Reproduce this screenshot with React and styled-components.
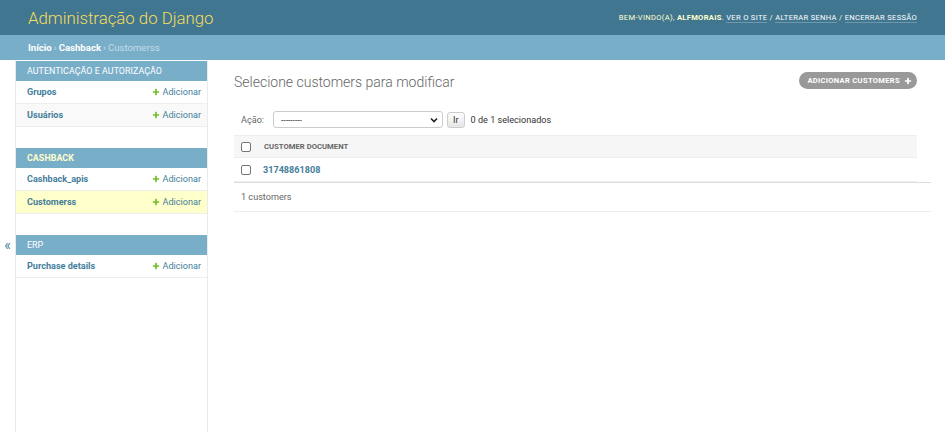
import React from 'react';
import styled, { createGlobalStyle } from 'styled-components';

const GlobalStyle = createGlobalStyle`
  html, body {
    margin: 0;
    padding: 0;
    background: #fff;
  }
  body {
    font-family: Roboto, "Liberation Sans", sans-serif;
    color: #333;
    font-size: 9.1px;
  }
  * {
    box-sizing: border-box;
  }
`;

const Page = styled.div`
  display: flex;
  flex-direction: column;
  min-height: 100vh;
`;

const Header = styled.div`
  display: flex;
  align-items: center;
  justify-content: space-between;
  height: 35px;
  padding: 0 28px;
  background: #417690;
`;

const Branding = styled.h1`
  margin: 0;
  font-size: 16.8px;
  font-weight: 300;
  color: #f5dd5d;
`;

const UserTools = styled.div`
  font-size: 7.6px;
  letter-spacing: 0.3px;
  text-transform: uppercase;
  color: #ffc;
  strong {
    font-weight: 700;
    color: #ffc;
  }
  a {
    color: #fff;
    text-decoration: none;
    border-bottom: 1px solid rgba(255, 255, 255, 0.25);
  }
`;

const Breadcrumbs = styled.div`
  display: flex;
  align-items: center;
  height: 25px;
  padding: 0 28px;
  background: #79aec8;
  color: #c4dce8;
  font-size: 9.6px;
  a {
    color: #fff;
    font-weight: 700;
    text-decoration: none;
  }
`;

const Sep = styled.span`
  margin: 0 2px;
`;

const Main = styled.div`
  flex: 1;
  display: flex;
`;

const Toggle = styled.div`
  flex: 0 0 16px;
  display: flex;
  align-items: center;
  justify-content: center;
  border-right: 1px solid #eaeaea;
  color: #447e9b;
  font-size: 14px;
  padding-bottom: 2px;
`;

const Sidebar = styled.nav`
  flex: 0 0 192px;
  border-right: 1px solid #eaeaea;
  border-top: 1px solid transparent;
`;

const Module = styled.div`
  margin-bottom: 21px;
`;

const Caption = styled.div`
  height: 20px;
  display: flex;
  align-items: center;
  padding: 0 11px;
  background: #79aec8;
  color: ${(p) => (p.current ? '#ffc' : '#fff')};
  font-weight: ${(p) => (p.current ? 700 : 400)};
  font-size: 8.9px;
  letter-spacing: 0.05px;
  text-transform: uppercase;
`;

const ModelRow = styled.div`
  height: 23px;
  display: flex;
  align-items: center;
  justify-content: space-between;
  padding: 0 6px 0 11px;
  border-bottom: 1px solid #eee;
  background: ${(p) => (p.current ? '#ffc' : p.even ? '#f9f9f9' : '#fff')};
`;

const ModelName = styled.a`
  color: #447e9b;
  font-weight: 700;
  font-size: 9.1px;
  text-decoration: none;
`;

const AddLink = styled.a`
  display: flex;
  align-items: center;
  gap: 3px;
  color: #447e9b;
  font-size: 9.1px;
  text-decoration: none;
`;

const PlusIcon = ({ color = '#70bf2b', size = 8 }) => (
  <svg width={size} height={size} viewBox="0 0 1792 1792">
    <path
      fill={color}
      d="M1600 796v192q0 40-28 68t-68 28h-416v416q0 40-28 68t-68 28h-192q-40 0-68-28t-28-68v-416h-416q-40 0-68-28t-28-68v-192q0-40 28-68t68-28h416v-416q0-40 28-68t68-28h192q40 0 68 28t28 68v416h416q40 0 68 28t28 68z"
    />
  </svg>
);

const Content = styled.div`
  flex: 1;
  padding: 14px 28px 14px 26px;
`;

const TitleRow = styled.div`
  display: flex;
  align-items: flex-start;
  justify-content: space-between;
  margin-bottom: 13px;
`;

const Title = styled.h1`
  margin: 0;
  font-size: 14px;
  font-weight: 300;
  line-height: 17px;
  color: #666;
`;

const ObjectTool = styled.a`
  display: flex;
  align-items: center;
  gap: 4px;
  height: 17px;
  margin-top: -2px;
  padding: 0 5px 0 8px;
  background: #999;
  border-radius: 10px;
  color: #fff;
  font-size: 7.6px;
  font-weight: 700;
  letter-spacing: 0.3px;
  text-transform: uppercase;
  text-decoration: none;
`;

const Actions = styled.div`
  display: flex;
  align-items: center;
  height: 31px;
  padding: 0 7px;
  color: #333;
`;

const ActionLabel = styled.label`
  color: #666;
  margin-right: 9px;
`;

const Select = styled.div`
  width: 170px;
  height: 17px;
  display: flex;
  align-items: center;
  justify-content: space-between;
  padding: 0 4px 0 7px;
  border: 1px solid #ccc;
  border-radius: 3px;
  font-size: 8.4px;
  color: #333;
`;

const GoButton = styled.button`
  height: 16px;
  margin-left: 4px;
  padding: 0 5px;
  border: 1px solid #ccc;
  border-radius: 3px;
  background: #fff;
  box-shadow: 0 -10px 14px -7px rgba(0, 0, 0, 0.15) inset;
  font-family: inherit;
  font-size: 9.1px;
  color: #333;
`;

const Counter = styled.span`
  margin-left: 6px;
`;

const Table = styled.table`
  width: 100%;
  border-collapse: collapse;
`;

const HeadCell = styled.th`
  height: 22px;
  padding: 0 ${(p) => (p.check ? '6px 0 7px' : '7px')};
  width: ${(p) => (p.check ? '23px' : 'auto')};
  background: #f6f6f6;
  border-top: 1px solid #eee;
  border-bottom: 1px solid #eee;
  text-align: left;
  color: #666;
  font-size: 7.7px;
  font-weight: 700;
  text-transform: uppercase;
`;

const Cell = styled.td`
  height: 24px;
  padding: 0 ${(p) => (p.check ? '6px 0 7px' : '6px')};
  border-bottom: 1px solid #eee;
`;

const Check = styled.span`
  display: block;
  width: 10px;
  height: 10px;
  border: 1px solid #767676;
  border-radius: 2px;
  background: #fff;
`;

const ResultLink = styled.a`
  color: #447e9b;
  font-weight: 700;
  font-size: 9.1px;
  text-decoration: none;
`;

const Paginator = styled.p`
  margin: 0 -14px 0 0;
  height: 30px;
  display: flex;
  align-items: center;
  padding: 0 7px;
  border-top: 1px solid #ddd;
  border-bottom: 1px solid #eee;
  color: #666;
  font-size: 9.1px;
`;

const modules = [
  {
    name: 'Autenticação e Autorização',
    models: ['Grupos', 'Usuários'],
  },
  {
    name: 'Cashback',
    current: true,
    models: ['Cashback_apis', 'Customerss'],
  },
  {
    name: 'ERP',
    models: ['Purchase details'],
  },
];

const App = () => {
  return (
    <Page>
      <GlobalStyle />
      <Header>
        <Branding>Administração do Django</Branding>
        <UserTools>
          Bem-vindo(a), <strong>alfmorais</strong>. <a>Ver o site</a> /{' '}
          <a>Alterar senha</a> / <a>Encerrar sessão</a>
        </UserTools>
      </Header>
      <Breadcrumbs>
        <a>Início</a>
        <Sep>›</Sep>
        <a>Cashback</a>
        <Sep>›</Sep>
        Customerss
      </Breadcrumbs>
      <Main>
        <Toggle>«</Toggle>
        <Sidebar>
          {modules.map((mod) => (
            <Module key={mod.name}>
              <Caption current={mod.current}>{mod.name}</Caption>
              {mod.models.map((model, i) => (
                <ModelRow
                  key={model}
                  even={i % 2 === 1}
                  current={model === 'Customerss'}
                >
                  <ModelName>{model}</ModelName>
                  <AddLink>
                    <PlusIcon />
                    Adicionar
                  </AddLink>
                </ModelRow>
              ))}
            </Module>
          ))}
        </Sidebar>
        <Content>
          <TitleRow>
            <Title>Selecione customers para modificar</Title>
            <ObjectTool>
              Adicionar customers
              <PlusIcon color="#fff" size={8} />
            </ObjectTool>
          </TitleRow>
          <Actions>
            <ActionLabel>Ação:</ActionLabel>
            <Select>
              <span>---------</span>
              <svg width="8" height="6" viewBox="0 0 8 6">
                <path d="M1 1.5l3 3 3-3" fill="none" stroke="#222" strokeWidth="1.6" />
              </svg>
            </Select>
            <GoButton>Ir</GoButton>
            <Counter>0 de 1 selecionados</Counter>
          </Actions>
          <Table>
            <thead>
              <tr>
                <HeadCell check>
                  <Check />
                </HeadCell>
                <HeadCell>Customer document</HeadCell>
              </tr>
            </thead>
            <tbody>
              <tr>
                <Cell check>
                  <Check />
                </Cell>
                <Cell>
                  <ResultLink>31748861808</ResultLink>
                </Cell>
              </tr>
            </tbody>
          </Table>
          <Paginator>1 customers</Paginator>
        </Content>
      </Main>
    </Page>
  );
};

export default App;
